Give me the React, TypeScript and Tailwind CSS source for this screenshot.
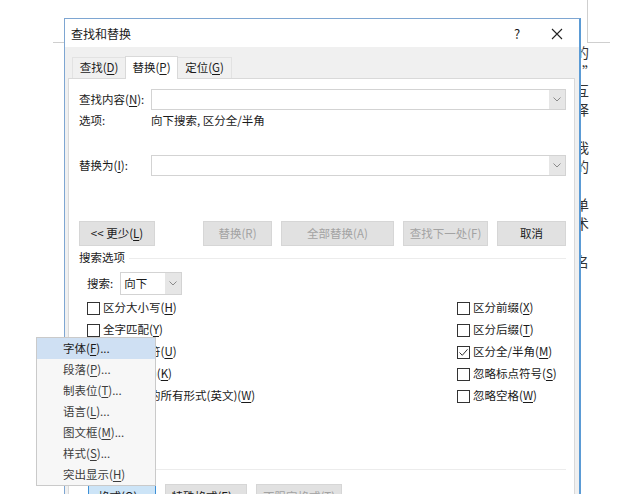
import React from 'react'

const Chevron = () => (
  <svg width="8" height="5" viewBox="0 0 8 5">
    <path d="M0.5 0.5l3.5 3.5 3.5-3.5" fill="none" stroke="#8a8a8a" strokeWidth="1" />
  </svg>
)

const Combo = ({ text = '' }: { text?: string }) => (
  <div className="flex-1 h-full flex border border-[#d3d3d3] bg-white">
    <div className="flex-1 pl-[3px] flex items-center">{text}</div>
    <div className="w-[16px] bg-[#e6e6e6] flex items-center justify-center">
      <Chevron />
    </div>
  </div>
)

const Btn = ({ w, children, disabled }: { w: string; children: React.ReactNode; disabled?: boolean }) => (
  <div
    className={`${w} h-[25px] flex items-center justify-center bg-[#e1e1e1] border border-[#d6d6d6] ${
      disabled ? 'text-[#a3a3a3]' : 'text-[#1a1a1a]'
    }`}
  >
    {children}
  </div>
)

const Check = ({ label, k, checked }: { label: string; k: string; checked?: boolean }) => (
  <div className="flex items-center h-[22px] gap-[3px]">
    <span className="w-[13px] h-[13px] border border-[#333] bg-white flex items-center justify-center">
      {checked && (
        <svg width="11" height="11" viewBox="0 0 11 11">
          <path d="M1.5 5.5l2.8 2.8 5.2-6" fill="none" stroke="#333" strokeWidth="1" />
        </svg>
      )}
    </span>
    <span>
      {label}(<u className="underline-offset-2">{k}</u>)
    </span>
  </div>
)

const menuItems = [
  ['字体', 'F', '...'],
  ['段落', 'P', '...'],
  ['制表位', 'T', '...'],
  ['语言', 'L', '...'],
  ['图文框', 'M', '...'],
  ['样式', 'S', '...'],
  ['突出显示', 'H', ''],
]

const pageChars = ['的', '。”', '互', '译', '', '我', '的', '', '单', '术', '', '名']

export default function App() {
  return (
    <div className="relative w-[640px] h-[494px] overflow-hidden bg-white font-['Microsoft_YaHei_UI','Noto_Sans_CJK_SC',sans-serif] text-[11.5px] text-[#1a1a1a]">
      {/* page behind the dialog */}
      <div className="absolute top-[42px] left-[53px] w-[11px] h-px bg-[#cfcfcf]" />
      <div className="absolute top-0 left-[587px] w-px h-[42px] bg-[#cfcfcf]" />
      <div className="absolute top-[42px] left-[587px] w-[23px] h-px bg-[#cfcfcf]" />
      <div className="absolute top-[43px] left-[575px] flex flex-col text-[14px] leading-[19px] text-[#333]">
        {pageChars.map((c, i) => (
          <div key={i} className="h-[19px]">{c}</div>
        ))}
      </div>

      {/* dialog */}
      <div className="absolute left-[64px] top-[18px] w-[517px] h-[490px] flex flex-col bg-[#f0f0f0] border border-[#7ea6d2] border-r-2 border-r-[#5b9bd5]">
        <div className="h-[28px] shrink-0 bg-white flex items-center pl-[6px] pt-[2px]">
          <span className="text-[12px]">查找和替换</span>
          <div className="ml-auto flex h-full">
            <div className="w-[36px] flex items-center justify-center text-[13px]">?</div>
            <div className="w-[44px] flex items-center justify-center">
              <svg width="12" height="12" viewBox="0 0 12 12">
                <path d="M1 1l10 10M11 1L1 11" stroke="#222" strokeWidth="1.1" />
              </svg>
            </div>
          </div>
        </div>

        <div className="h-[31px] shrink-0 flex items-end pl-[7px]">
          <div className="w-[53px] h-[21px] flex items-center justify-center border-t border-l border-[#e2e2e2]">
            查找(<u className="underline-offset-2">D</u>)
          </div>
          <div className="w-[53px] h-[23px] flex items-center justify-center bg-white border-t border-l border-r border-[#d9d9d9] relative top-px">
            替换(<u className="underline-offset-2">P</u>)
          </div>
          <div className="w-[54px] h-[21px] flex items-center justify-center border-t border-r border-[#e2e2e2]">
            定位(<u className="underline-offset-2">G</u>)
          </div>
        </div>

        <div className="flex-1 ml-[3px] mr-[4px] bg-white border border-[#d9d9d9] pl-[10px] pr-[8px] pt-[10px] flex flex-col">
          <div className="h-[21px] flex items-center">
            <div className="w-[72px]">
              查找内容(<u className="underline-offset-2">N</u>):
            </div>
            <Combo />
          </div>
          <div className="h-[20px] mt-[1px] flex items-center">
            <div className="w-[72px]">选项:</div>
            <div>向下搜索, 区分全/半角</div>
          </div>

          <div className="h-[21px] mt-[24px] flex items-center">
            <div className="w-[72px]">
              替换为(<u className="underline-offset-2">I</u>):
            </div>
            <Combo />
          </div>

          <div className="h-[25px] mt-[45px] flex items-center">
            <Btn w="w-[76px]">
              &lt;&lt; 更少(<u className="underline-offset-2">L</u>)
            </Btn>
            <div className="ml-[48px] flex gap-[9px]">
              <Btn w="w-[69px]" disabled>替换(R)</Btn>
              <Btn w="w-[113px]" disabled>全部替换(A)</Btn>
              <Btn w="w-[85px]" disabled>查找下一处(F)</Btn>
              <Btn w="w-[69px]">取消</Btn>
            </div>
          </div>

          <div className="h-[18px] mt-[3px] flex items-center gap-[4px]">
            <span>搜索选项</span>
            <div className="flex-1 h-px bg-[#ececec]" />
          </div>

          <div className="h-[23px] mt-[5px] pl-[8px] flex items-center gap-[7px]">
            <span>搜索:</span>
            <div className="w-[62px] h-full flex">
              <Combo text="向下" />
            </div>
          </div>

          <div className="mt-[2px] pl-[8px] grid grid-cols-[370px_1fr]">
            <div className="flex flex-col">
              <Check label="区分大小写" k="H" />
              <Check label="全字匹配" k="Y" />
              <Check label="使用通配符" k="U" />
              <Check label="同音(英文)" k="K" />
              <Check label="查找单词的所有形式(英文)" k="W" />
            </div>
            <div className="flex flex-col">
              <Check label="区分前缀" k="X" />
              <Check label="区分后缀" k="T" />
              <Check label="区分全/半角" k="M" checked />
              <Check label="忽略标点符号" k="S" />
              <Check label="忽略空格" k="W" />
            </div>
          </div>

          <div className="h-[18px] mt-[53px] flex items-center gap-[4px]">
            <span>替换</span>
            <div className="flex-1 h-px bg-[#ececec]" />
          </div>

          <div className="h-[25px] mt-[6px] pl-[9px] flex gap-[9px]">
            <div className="w-[68px] h-[25px] flex items-center justify-center bg-[#cce4f7] border border-[#3c8fd6]">
              格式(<u className="underline-offset-2">O</u>) ▾
            </div>
            <Btn w="w-[82px]">
              特殊格式(<u className="underline-offset-2">E</u>) ▾
            </Btn>
            <Btn w="w-[86px]" disabled>不限定格式(T)</Btn>
          </div>
        </div>
      </div>

      {/* format menu */}
      <div className="absolute left-[36px] top-[337px] w-[120px] flex flex-col bg-[#f7f7f7] border border-[#cacaca] text-[#3c3c3c]">
        {menuItems.map(([t, k, dots], i) => (
          <div
            key={t}
            className={`h-[21px] pl-[26px] flex items-center ${i === 0 ? 'bg-[#cfe0f3] text-[#1a1a1a]' : ''}`}
          >
            {t}(<u className="underline-offset-2">{k}</u>){dots}
          </div>
        ))}
      </div>
    </div>
  )
}
